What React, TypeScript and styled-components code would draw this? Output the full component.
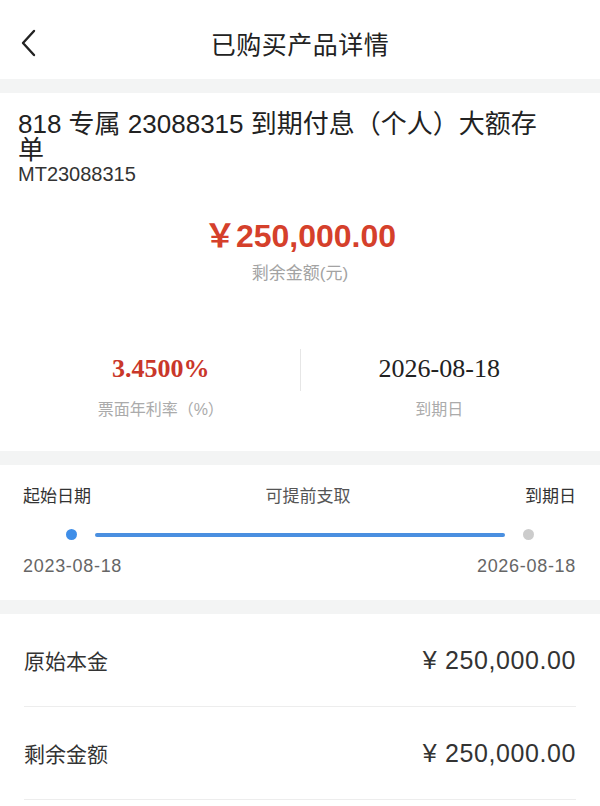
import { styled, createGlobalStyle } from 'styled-components';

const GlobalStyle = createGlobalStyle`
    body {
        margin: 0;
        background: #ffffff;
        font-family: "Liberation Sans", "Noto Sans CJK SC", sans-serif;
        color: #222222;
    }
`;

const detailRows = [
    { label: '原始本金', value: '¥ 250,000.00' },
    { label: '剩余金额', value: '¥ 250,000.00' },
];

const BackIcon = () => (
    <svg width="16" height="28" viewBox="0 0 16 28" fill="none">
        <path d="M14 2 L3 14 L14 26" stroke="#222" strokeWidth="2.4" strokeLinecap="round" strokeLinejoin="round" />
    </svg>
);

export default function App() {
    return (
        <Page>
            <GlobalStyle />
            <Header>
                <BackButton>
                    <BackIcon />
                </BackButton>
                <HeaderTitle>已购买产品详情</HeaderTitle>
            </Header>
            <Band />
            <InfoSection>
                <ProductName>818 专属 23088315 到期付息（个人）大额存单</ProductName>
                <ProductCode>MT23088315</ProductCode>
                <Amount>￥250,000.00</Amount>
                <AmountLabel>剩余金额(元)</AmountLabel>
                <StatsRow>
                    <StatCol>
                        <StatValue $accent>3.4500%</StatValue>
                        <StatLabel>票面年利率（%）</StatLabel>
                    </StatCol>
                    <StatDivider />
                    <StatCol>
                        <StatValue>2026-08-18</StatValue>
                        <StatLabel>到期日</StatLabel>
                    </StatCol>
                </StatsRow>
            </InfoSection>
            <Band />
            <TimelineSection>
                <TimelineLabels>
                    <TimelineLabel>起始日期</TimelineLabel>
                    <TimelineLabel $muted>可提前支取</TimelineLabel>
                    <TimelineLabel>到期日</TimelineLabel>
                </TimelineLabels>
                <Track>
                    <Dot $active />
                    <TrackLine />
                    <Dot />
                </Track>
                <TimelineDates>
                    <DateText>2023-08-18</DateText>
                    <DateText>2026-08-18</DateText>
                </TimelineDates>
            </TimelineSection>
            <Band />
            <DetailList>
                {detailRows.map((row) => (
                    <DetailRow key={row.label}>
                        <DetailLabel>{row.label}</DetailLabel>
                        <DetailValue>{row.value}</DetailValue>
                    </DetailRow>
                ))}
            </DetailList>
        </Page>
    );
}

const Page = styled.div`
    display: flex;
    flex-direction: column;
    width: 600px;
    min-height: 806px;
    background: #ffffff;
`;

const Header = styled.div`
    position: relative;
    display: flex;
    align-items: center;
    justify-content: center;
    height: 79px;
    padding-top: 6px;
    box-sizing: border-box;
`;

const BackButton = styled.div`
    position: absolute;
    left: 20px;
    top: 29px;
    display: flex;
`;

const HeaderTitle = styled.div`
    font-size: 25px;
    color: #222222;
    letter-spacing: 0.5px;
`;

const Band = styled.div`
    height: 14px;
    background: #f3f4f4;
`;

const InfoSection = styled.div`
    display: flex;
    flex-direction: column;
    padding: 18px 0 30px;
`;

const ProductName = styled.div`
    padding: 0 50px 0 18px;
    font-size: 26px;
    line-height: 26px;
    color: #222222;
`;

const ProductCode = styled.div`
    margin-top: 2px;
    padding: 0 18px;
    font-size: 20px;
    line-height: 18px;
    color: #333333;
`;

const Amount = styled.div`
    margin-top: 33px;
    text-align: center;
    font-size: 32px;
    line-height: 40px;
    font-weight: 700;
    color: #d5402b;
`;

const AmountLabel = styled.div`
    margin-top: 7px;
    text-align: center;
    font-size: 17px;
    line-height: 22px;
    color: #a3a3a3;
`;

const StatsRow = styled.div`
    display: flex;
    margin-top: 68px;
    padding: 0 22px;
`;

const StatCol = styled.div`
    flex: 1;
    display: flex;
    flex-direction: column;
    align-items: center;
`;

const StatDivider = styled.div`
    align-self: flex-start;
    width: 1px;
    height: 42px;
    margin-top: -4px;
    background: #e6e6e6;
`;

const StatValue = styled.div<{ $accent?: boolean }>`
    font-family: "Liberation Serif", serif;
    font-size: 26px;
    line-height: 32px;
    font-weight: ${({ $accent }) => ($accent ? 700 : 400)};
    color: ${({ $accent }) => ($accent ? '#c9372a' : '#222222')};
`;

const StatLabel = styled.div`
    margin-top: 14px;
    font-size: 16px;
    line-height: 22px;
    color: #ababab;
`;

const TimelineSection = styled.div`
    display: flex;
    flex-direction: column;
    padding: 21px 24px 23px 23px;
`;

const TimelineLabels = styled.div`
    display: flex;
    justify-content: space-between;
`;

const TimelineLabel = styled.div<{ $muted?: boolean }>`
    font-size: 17px;
    line-height: 22px;
    color: ${({ $muted }) => ($muted ? '#555555' : '#333333')};
`;

const Track = styled.div`
    display: flex;
    align-items: center;
    gap: 18px;
    margin-top: 21px;
    padding: 0 42px 0 43px;
`;

const Dot = styled.div<{ $active?: boolean }>`
    flex: none;
    width: 11px;
    height: 11px;
    border-radius: 50%;
    background: ${({ $active }) => ($active ? '#3f8ee8' : '#cccccc')};
`;

const TrackLine = styled.div`
    flex: 1;
    height: 4px;
    border-radius: 2px;
    background: #4a8fe0;
`;

const TimelineDates = styled.div`
    display: flex;
    justify-content: space-between;
    margin-top: 15px;
`;

const DateText = styled.div`
    font-size: 18px;
    line-height: 22px;
    letter-spacing: 0.7px;
    color: #666666;
`;

const DetailList = styled.div`
    display: flex;
    flex-direction: column;
`;

const DetailRow = styled.div`
    display: flex;
    align-items: center;
    justify-content: space-between;
    height: 92px;
    margin: 0 24px;
    border-bottom: 1px solid #ededed;
`;

const DetailLabel = styled.div`
    font-size: 21px;
    color: #333333;
`;

const DetailValue = styled.div`
    font-size: 25px;
    letter-spacing: 0.6px;
    color: #333333;
`;
